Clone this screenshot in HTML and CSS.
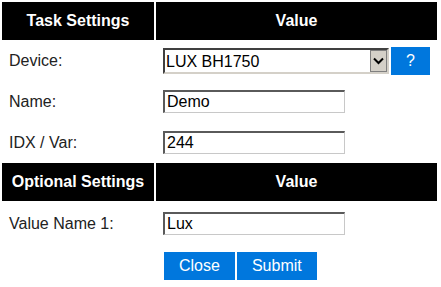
FILE: index.html
```html
<!DOCTYPE html>
<html lang="en">
<head>
    <meta charset="UTF-8">
    <meta name="viewport" content="width=device-width, initial-scale=1.0">
    <title>Task Settings</title>
    <link rel="stylesheet" href="styles.css">
</head>
<body>
    <form class="task-form">
        <table class="settings">
            <tr>
                <th class="col-label">Task Settings</th>
                <th>Value</th>
            </tr>
            <tr class="device-row">
                <td>Device:</td>
                <td>
                    <div class="device-field">
                        <div class="select-box">
                            <select id="device">
                                <option>LUX BH1750</option>
                            </select>
                            <span class="arrow">
                                <svg width="11" height="8" viewBox="0 0 11 8">
                                    <path d="M1 1.5 L5.5 6 L10 1.5" fill="none" stroke="#000" stroke-width="2"/>
                                </svg>
                            </span>
                        </div>
                        <a class="button help" href="#">?</a>
                    </div>
                </td>
            </tr>
            <tr class="field-row">
                <td>Name:</td>
                <td><input type="text" class="wide" value="Demo"></td>
            </tr>
            <tr class="field-row">
                <td>IDX / Var:</td>
                <td><input type="text" class="wide" value="244"></td>
            </tr>
            <tr>
                <th class="col-label">Optional Settings</th>
                <th>Value</th>
            </tr>
            <tr class="field-row">
                <td>Value Name 1:</td>
                <td><input type="text" class="wide" value="Lux"></td>
            </tr>
            <tr class="button-row">
                <td></td>
                <td>
                    <div class="actions">
                        <a class="button" href="#">Close</a>
                        <a class="button" href="#">Submit</a>
                    </div>
                </td>
            </tr>
        </table>
    </form>
</body>
</html>
```

FILE: styles.css
```css
body {
    margin: 0;
    font-family: 'Liberation Sans', Arial, sans-serif;
    font-size: 16px;
    color: #222;
    background: white;
}

.settings {
    width: 439px;
    border-spacing: 2px;
    table-layout: fixed;
}

th {
    padding: 10px 2px;
    line-height: 18px;
    background-color: black;
    color: white;
    font-weight: bold;
    white-space: nowrap;
}

.col-label {
    width: 152px;
    box-sizing: border-box;
}

td {
    padding: 9px 7px 7px;
    line-height: 18px;
    white-space: nowrap;
}

.device-row td {
    padding: 5px 7px 4px;
}

.device-field {
    display: flex;
    align-items: center;
    gap: 2px;
}

.select-box {
    flex: none;
    display: flex;
    width: 226px;
    height: 26px;
    box-sizing: border-box;
    border-style: solid;
    border-width: 2px;
    border-color: #404040 #d4d0c8 #d4d0c8 #404040;
    background: white;
}

.select-box select {
    flex: 1;
    min-width: 0;
    appearance: none;
    -webkit-appearance: none;
    border: none;
    outline: none;
    background: white;
    font-family: inherit;
    font-size: 16px;
    color: black;
    padding: 0 1px;
    margin: 0;
}

.arrow {
    width: 17px;
    box-sizing: border-box;
    display: flex;
    align-items: center;
    justify-content: center;
    background: #d4d0c8;
    border: 1px solid #808080;
}

input.wide {
    display: block;
    width: 182px;
    height: 23px;
    box-sizing: border-box;
    margin: 0;
    padding: 0 2px;
    border-style: solid;
    border-width: 2px 1px 1px 2px;
    border-color: #5a5a5a #c8c8c8 #c8c8c8 #5a5a5a;
    font-family: inherit;
    font-size: 16px;
    color: black;
}

.button-row td {
    padding-top: 8px;
}

.actions {
    display: flex;
    gap: 2px;
    margin-left: 1px;
}

.button {
    display: inline-block;
    flex: none;
    padding: 5px 15px;
    line-height: 18px;
    background-color: #07d;
    color: white;
    text-decoration: none;
}

.help {
    width: 39px;
    box-sizing: border-box;
    text-align: center;
}
```
